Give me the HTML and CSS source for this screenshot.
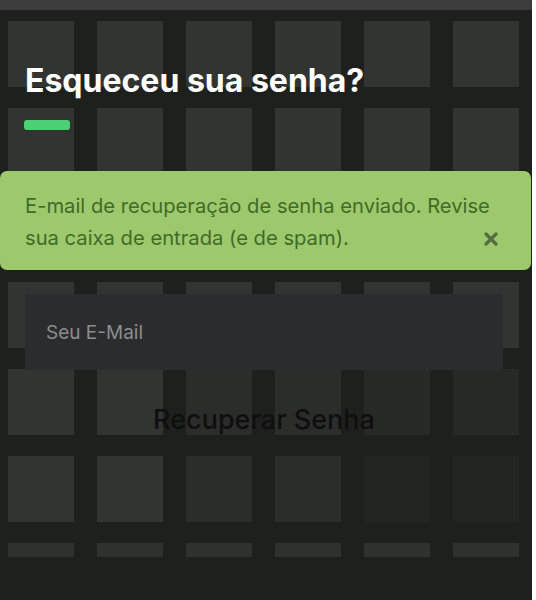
FILE: index.html
```html
<!DOCTYPE html>
<html lang="pt-BR">
<head>
  <meta charset="UTF-8">
  <title>Esqueceu sua senha?</title>
  <link rel="stylesheet" href="styles.css">
</head>
<body>
  <div class="screen">
    <div class="topbar"></div>

    <div class="stage">
      <div class="skeleton">
        <div class="tile"></div><div class="tile"></div><div class="tile"></div>
        <div class="tile"></div><div class="tile"></div><div class="tile"></div>

        <div class="tile"></div><div class="tile"></div><div class="tile"></div>
        <div class="tile"></div><div class="tile"></div><div class="tile"></div>

        <div class="tile"></div><div class="tile"></div><div class="tile"></div>
        <div class="tile"></div><div class="tile"></div><div class="tile"></div>

        <div class="tile"></div><div class="tile"></div><div class="tile"></div>
        <div class="tile"></div><div class="tile"></div><div class="tile"></div>

        <div class="tile"></div><div class="tile"></div><div class="tile dim"></div>
        <div class="tile dim"></div><div class="tile dimmer"></div><div class="tile dimmer"></div>

        <div class="tile"></div><div class="tile"></div><div class="tile dim"></div>
        <div class="tile dim"></div><div class="tile darkest"></div><div class="tile darkest"></div>

        <div class="bar"></div><div class="bar"></div><div class="bar"></div>
        <div class="bar"></div><div class="bar"></div><div class="bar"></div>
      </div>

      <main class="panel">
        <h1 class="title">Esqueceu sua senha?</h1>
        <div class="accent"></div>

        <div class="alert">
          <p>E-mail de recuperação de senha enviado. Revise sua caixa de entrada (e de spam).</p>
          <button class="alert-close" aria-label="Fechar">
            <svg width="14" height="14" viewBox="0 0 14 14">
              <path d="M2 2 L12 12 M12 2 L2 12" stroke="currentColor" stroke-width="3.2" stroke-linecap="round"/>
            </svg>
          </button>
        </div>

        <form class="form">
          <input type="email" class="email" placeholder="Seu E-Mail">
          <button type="button" class="submit">Recuperar Senha</button>
        </form>
      </main>
    </div>
  </div>
</body>
</html>
```

FILE: styles.css
```css
body {
  margin: 0;
  background: #fff;
  font-family: Inter, "Liberation Sans", Arial, sans-serif;
}
.screen {
  width: 532px;
  height: 600px;
  background: #1e201e;
  overflow: hidden;
}
.topbar {
  height: 10px;
  background: #3b3c3b;
}
.stage {
  display: grid;
}
.skeleton, .panel {
  grid-area: 1 / 1;
}

/* faded placeholder grid behind the form */
.skeleton {
  display: grid;
  grid-template-columns: repeat(6, 66px);
  grid-template-rows: repeat(6, 66px) 14px;
  column-gap: 23px;
  row-gap: 21px;
  padding: 11px 0 0 8px;
}
.tile {
  background: #323432;
}
.tile.dim {
  background: #2b2d2b;
}
.tile.dimmer {
  background: #272927;
}
.tile.darkest {
  background: #232523;
}
.bar {
  background: #2f312f;
}

.panel {
  padding-top: 51px;
}
.title {
  margin: 0 0 0 25px;
  font-size: 32px;
  line-height: 40px;
  font-weight: 700;
  color: #fff;
}
.accent {
  width: 46px;
  height: 10px;
  margin: 19px 0 0 24px;
  border-radius: 3px;
  background: #4cd074;
}

.alert {
  position: relative;
  width: 531px;
  height: 99px;
  box-sizing: border-box;
  margin-top: 41px;
  padding: 19px 40px 0 25px;
  border-radius: 7px;
  background: #9dc96c;
}
.alert p {
  margin: 0;
  font-size: 20.2px;
  line-height: 32px;
  color: #416b29;
}
.alert-close {
  position: absolute;
  right: 33px;
  bottom: 24px;
  padding: 0;
  border: 0;
  background: none;
  color: #536d43;
  line-height: 0;
}

.form {
  display: flex;
  flex-direction: column;
  align-items: center;
  width: 478px;
  margin: 24px 0 0 25px;
}
.email {
  width: 100%;
  height: 76px;
  box-sizing: border-box;
  padding: 0 21px;
  border: 0;
  border-radius: 3px;
  background: #2b2c2e;
  font-family: inherit;
  font-size: 19px;
  color: #ddd;
}
.email::placeholder {
  color: #8b8c8e;
}
.submit {
  margin-top: 35px;
  padding: 0;
  border: 0;
  background: none;
  font-family: inherit;
  font-size: 27px;
  line-height: 30px;
  font-weight: 500;
  color: #0e0f0e;
}
```
